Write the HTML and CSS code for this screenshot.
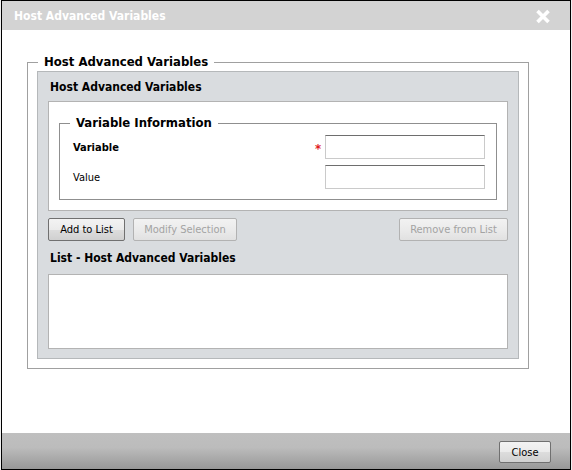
FILE: index.html
```
<!DOCTYPE html>
<html>
<head>
<meta charset="utf-8">
<link rel="stylesheet" href="styles.css">
</head>
<body>
<div class="dialog">
  <div class="titlebar">
    <span class="title">Host Advanced Variables</span>
    <svg class="close-x" width="16" height="15" viewBox="0 0 16 15"><path d="M2.5 2 L13.5 13 M13.5 2 L2.5 13" stroke="#fff" stroke-width="3.6" stroke-linecap="butt"/></svg>
  </div>
  <div class="content">
    <fieldset class="outer">
      <legend class="outer-legend">Host Advanced Variables</legend>
      <div class="panel">
        <div class="panel-head">Host Advanced Variables</div>
        <div class="whitebox">
          <fieldset class="info">
            <legend class="info-legend">Variable Information</legend>
            <div class="row">
              <span class="label bold">Variable</span>
              <span class="req">*</span>
              <input class="field" type="text">
            </div>
            <div class="row">
              <span class="label">Value</span>
              <input class="field" type="text">
            </div>
          </fieldset>
        </div>
        <div class="actions">
          <button class="btn btn-add">Add to List</button>
          <button class="btn btn-modify" disabled>Modify Selection</button>
          <span class="spacer"></span>
          <button class="btn btn-remove" disabled>Remove from List</button>
        </div>
        <div class="list-head">List - Host Advanced Variables</div>
        <div class="listbox"></div>
      </div>
    </fieldset>
  </div>
  <div class="footer">
    <button class="btn close-btn">Close</button>
  </div>
</div>
</body>
</html>
```
FILE: styles.css
```
html, body {
  margin: 0;
  padding: 0;
}
body {
  background: #f0f0f0;
  font-family: "DejaVu Sans Condensed", "DejaVu Sans", sans-serif;
  font-size: 11px;
  color: #000;
}
.dialog {
  box-sizing: border-box;
  margin-left: 1px;
  width: 570px;
  height: 470px;
  border: 1px solid #000;
  display: flex;
  flex-direction: column;
  background: #fff;
}
.titlebar {
  height: 29px;
  flex: none;
  background: #d3d3d3;
  display: flex;
  align-items: center;
  justify-content: space-between;
  padding: 0 19px 0 12px;
}
.title {
  color: #fff;
  font-weight: bold;
  font-size: 12px;
}
.close-x {
  display: block;
  margin-top: 1px;
}
.content {
  flex: 1;
  padding: 24px 0 0 25px;
}
.outer {
  box-sizing: border-box;
  width: 502px;
  margin: 0;
  border: 1px solid #a0a0a0;
  padding: 1px 9px 9px 9px;
}
.outer-legend {
  font-weight: bold;
  font-size: 13px;
  line-height: 16px;
  padding: 0 6px;
  margin-left: 1px;
}
.panel {
  background: #d9dcdf;
  border: 1px solid #b5b8ba;
  padding: 0 10px 9px 10px;
}
.panel-head {
  height: 29px;
  line-height: 31px;
  padding-left: 2px;
  font-weight: bold;
  font-size: 12px;
}
.whitebox {
  background: #fff;
  border: 1px solid #b3b3b3;
  padding: 13px 10px 10px 10px;
}
.info {
  margin: 0;
  border: 1px solid #8f8f8f;
  padding: 4px 11px 10px 10px;
  display: flex;
  flex-direction: column;
  gap: 6px;
}
.info-legend {
  font-weight: bold;
  font-size: 13px;
  line-height: 16px;
  padding: 0 6px;
}
.row {
  display: flex;
  align-items: center;
  height: 24px;
}
.label {
  padding-left: 3px;
  flex: 1;
}
.bold {
  font-weight: bold;
}
.req {
  color: #e0201c;
  font-size: 13px;
  font-weight: bold;
  margin-right: 4px;
  margin-top: 2px;
}
.field {
  box-sizing: border-box;
  width: 160px;
  height: 24px;
  margin: 0;
  border: 1px solid #cacaca;
  border-top-color: #6e6e6e;
  background: #fff;
  padding: 0 3px;
  font: inherit;
}
.actions {
  display: flex;
  margin-top: 7px;
  gap: 8px;
}
.spacer {
  flex: 1;
}
.btn {
  box-sizing: border-box;
  height: 23px;
  margin: 0;
  padding: 0;
  font-family: inherit;
  font-size: 11px;
  color: #000;
  border: 1px solid #707070;
  border-radius: 2px;
  background: linear-gradient(to bottom, #f3f3f3 0%, #ebebeb 50%, #dddddd 51%, #d0d0d0 100%);
}
.btn-add {
  width: 77px;
}
.btn-modify {
  width: 104px;
}
.btn-remove {
  width: 109px;
}
.btn:disabled {
  color: #a3a3a3;
  border-color: #b2b2b2;
  background: linear-gradient(to bottom, #f2f2f2 0%, #ebebeb 50%, #e1e1e1 100%);
}
.list-head {
  height: 33px;
  line-height: 34px;
  padding-left: 2px;
  font-weight: bold;
  font-size: 12px;
}
.listbox {
  height: 75px;
  box-sizing: border-box;
  background: #fff;
  border: 1px solid #b3b3b3;
}
.footer {
  height: 36px;
  flex: none;
  background: linear-gradient(to bottom, #bfbfbf 0%, #bcbcbc 40%, #989898 100%);
  display: flex;
  align-items: center;
  justify-content: flex-end;
  padding-right: 19px;
}
.close-btn {
  width: 52px;
  height: 22px;
  margin-top: 2px;
}
```
